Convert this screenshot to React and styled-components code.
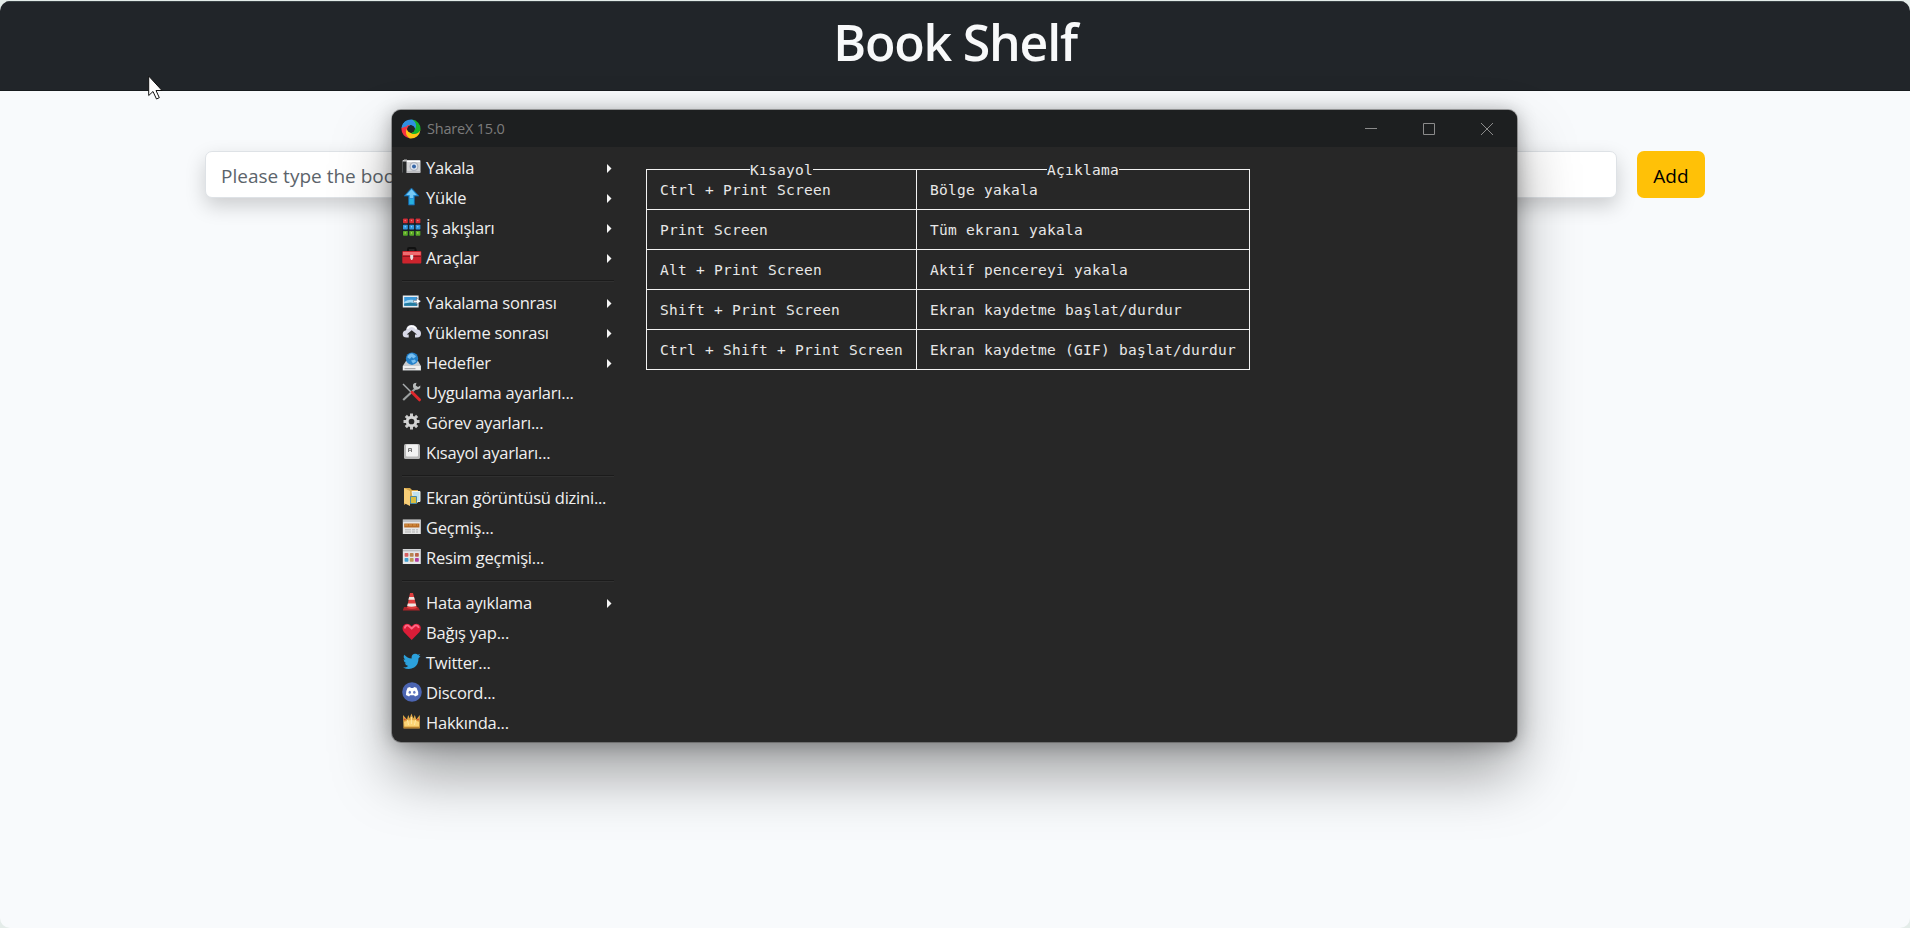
import React from 'react';
import styled, { createGlobalStyle } from 'styled-components';

const Global = createGlobalStyle`
  * { box-sizing: border-box; }
  html, body, #root { height: 100%; }
  body { margin: 0; background: #e4ece9; overflow: hidden; }
`;

const Page = styled.div`
  height: 928px;
  padding-top: 1px;
  font-family: 'Open Sans', 'Noto Sans', sans-serif;
`;

const Browser = styled.div`
  position: relative;
  height: 927px;
  background: #f8fafc;
  border-radius: 10px;
  overflow: hidden;
`;

const Header = styled.header`
  height: 90px;
  background: #212529;
  border-top: 1px solid #3a4346;
  border-bottom: 1px solid #171b1e;
  display: flex;
  justify-content: center;
`;

const Title = styled.h1`
  margin: 0;
  color: #f8f9fa;
  font-size: 50px;
  font-weight: 600;
  line-height: 80px;
  letter-spacing: -1.2px;
`;

const Form = styled.form`
  margin: 60px 205px 0;
  display: flex;
  gap: 20px;
`;

const BookInput = styled.input`
  flex: 1;
  height: 47px;
  padding: 2px 15px 0;
  border: 1px solid #dee2e6;
  border-radius: 7px;
  background: #fff;
  box-shadow: 0 8px 20px rgba(0, 0, 0, 0.18);
  font: 19px 'Open Sans', 'Noto Sans', sans-serif;
  letter-spacing: 0;
  outline: none;
  &::placeholder { color: #5c646b; opacity: 1; }
`;

const AddButton = styled.button`
  width: 68px;
  height: 47px;
  border: 0;
  border-radius: 7px;
  background: #ffc107;
  color: #000;
  font: 19px 'Open Sans', 'Noto Sans', sans-serif;
  padding: 2px 0 0;
`;

const Cursor = styled.svg`
  position: absolute;
  left: 148px;
  top: 74px;
`;

const Window = styled.section`
  position: absolute;
  left: 392px;
  top: 109px;
  width: 1125px;
  height: 632px;
  border-radius: 9px;
  background: #272727;
  box-shadow: 0 0 0 1px rgba(70, 70, 70, 0.45), 0 32px 60px rgba(0, 0, 0, 0.36), 0 2px 20px rgba(0, 0, 0, 0.3);
`;

const TitleBar = styled.div`
  height: 37px;
  padding: 0 24px 0 9px;
  display: flex;
  align-items: center;
  background: #1d1f20;
  border-radius: 9px 9px 0 0;
`;

const WindowTitle = styled.span`
  flex: 1;
  margin-left: 6px;
  color: #7c7c7c;
  font-size: 14.5px;
  letter-spacing: -0.2px;
`;

const WindowControls = styled.div`
  display: flex;
  gap: 46px;
`;

const WindowBody = styled.div`
  display: flex;
`;

const Menu = styled.nav`
  width: 222px;
  padding: 6px 0 0 10px;
`;

const MenuRow = styled.div`
  height: 30px;
  display: flex;
  align-items: center;
  color: #f0f0f0;
`;

const IconSvg = styled.svg`
  flex: none;
  margin-bottom: 2px;
`;

const MenuLabel = styled.span`
  flex: 1;
  margin-left: 4px;
  font-size: 16.5px;
  line-height: 30px;
  letter-spacing: -0.22px;
  white-space: nowrap;
`;

const Separator = styled.div`
  height: 15px;
  display: flex;
  align-items: center;
  &::after {
    content: '';
    flex: 1;
    height: 1px;
    background: #1b1b1b;
    box-shadow: 0 1px #303030;
  }
`;

const ShortcutTable = styled.div`
  margin: 22px 0 0 32px;
  width: 604px;
  height: 201px;
  display: grid;
  grid-template-columns: 270px 333px;
  grid-auto-rows: 40px;
  border: solid #f2f2f2;
  border-width: 1px 0 0 1px;
  font: 14.5px 'DejaVu Sans Mono', monospace;
  letter-spacing: 0.27px;
  color: #e8e8e8;
  position: relative;
`;

const Cell = styled.div`
  padding-left: 13px;
  line-height: 41px;
  border: solid #f2f2f2;
  border-width: 0 1px 1px 0;
  white-space: pre;
`;

const ColumnTitle = styled.span`
  position: absolute;
  top: -10px;
  left: ${(p) => p.$left}px;
  line-height: 20px;
  background: #272727;
`;

const Icon = ({ children }) => (
  <IconSvg width="20" height="20" viewBox="0 0 20 20">{children}</IconSvg>
);

const dots = (colors, size, x0, y0, dx, dy) =>
  colors.flatMap((row, r) => row.map((c, i) => (
    <rect key={`${r}-${i}`} x={x0 + i * dx} y={y0 + r * dy} width={size} height={size} rx=".7" fill={c} />
  )));

const icons = {
  camera: <Icon><rect x=".5" y="3" width="18" height="13" rx="1" fill="#d4d5d7" /><rect x=".5" y="4.5" width="4" height="11.5" fill="#252728" /><path d="M2 2.500h3V4H2z" fill="#bbb" /><path d="M5 4.500h13" stroke="#fff" /><path d="M5 15h13.500" stroke="#a5a6aa" /><circle cx="12" cy="9.5" r="4.5" fill="#aeb3bd" /><circle cx="12" cy="9.5" r="3.2" fill="#e2e7f0" /><circle cx="12" cy="9.5" r="2" fill="#3868a8" /></Icon>,
  upload: <Icon><path d="M9.5 1L17 9h-4.5v9h-6V9H2z" fill="#2795db" stroke="#175f99" strokeWidth=".8" /><path d="M9.5 2.2L14.5 8h-3.3v3H7.8V8H4.3z" fill="#75c8f5" /><rect x="7.5" y="12" width="4" height="5" fill="#27b0de" /></Icon>,
  grid: <Icon><rect x=".5" y="1" width="18" height="18" rx="1" fill="#17212a" />{dots([['#d32f35', '#d32f35', '#d32f35'], ['#3295dc', '#3295dc', '#3295dc'], ['#5aa927', '#5aa927', '#5aa927']], 4.8, 1, 1.5, 6.3, 6.2)}{dots([['#f28484', '#f28484', '#f28484'], ['#93d9ff', '#93d9ff', '#93d9ff'], ['#c0ec72', '#c0ec72', '#c0ec72']], 1.4, 2.5, 2.8, 6.3, 6.2)}</Icon>,
  toolbox: <Icon><path d="M6 5V2.2q0-1.2 1.2-1.2h5q1.3 0 1.3 1.2V5" fill="none" stroke="#111" strokeWidth="2" /><rect x=".3" y="4" width="19" height="12.5" rx="1" fill="#cd242d" /><path d="M1 5h17.7v3H1z" fill="#ee6d70" /><path d="M.3 9.5h19" stroke="#8f1820" /><path d="M8.2 8h3v3l-1 2h-1l-1-2z" fill="#e5e5e5" /></Icon>,
  capture: <Icon><rect x=".8" y="3.5" width="15.8" height="12" fill="#e8edf2" /><rect x="2.2" y="5" width="13" height="8.8" fill="#3d9bdc" /><path d="M2.2 10q5-4 13-1v2H2.2z" fill="#a8daf3" /><path d="M2.2 12q6-3 13 0v1.8H2.2z" fill="#237b9e" /><path d="M11.5 8.400h3V6L19 9.2l-4.500 3.400v-2.300h-3z" fill="#fff" stroke="#334" strokeWidth=".4" /></Icon>,
  cloud: <Icon><path d="M4.5 15.5Q.7 15.5.7 12q0-3 3.3-3.8Q4.7 3 9.7 3q4.6 0 5.8 4.6 3.5.6 3.5 4 0 3.9-4 3.9h-2v-3h2L9.7 8.300 4.700 12.500h2v3z" fill="#d8d9e7" /><path d="M5.5 7Q7 4 10 4.2q3 .1 4.2 3" fill="none" stroke="#fff" strokeWidth="1.4" /></Icon>,
  target: <Icon><path d="M4 9h12l3 5v4.5H.7V14z" fill="#c8cbce" /><path d="M1 14h17.5v4H1z" fill="#eee" /><path d="M2.5 16.7h11" stroke="#959799" /><circle cx="10" cy="6.7" r="6.2" fill="#2581c9" /><path d="M5.2 5.3Q7 1.3 10.3 1.6l3.8 2.6-2.5 2.2-2-1.3-1.8 2zM9 8.5l4-1 1 2-3 2z" fill="#77bff1" /></Icon>,
  tools: <Icon><path d="M1 2l8 8" stroke="#a9adaf" strokeWidth="1.5" /><path d="M1.2 18L14 6" stroke="#9ca0a0" strokeWidth="2.2" /><path d="M12.2 1.2q-2 1.4-.8 4.7 2.4 3 5.4 1.2 2-1.2 1.6-3.6L16 5l-2.3-1.5.8-2.7z" fill="#b8bbbb" /><path d="M10 10.3l7.5 7.5" stroke="#df282c" strokeWidth="3" strokeLinecap="round" /></Icon>,
  gear: <Icon>{[0, 45, 90, 135, 180, 225, 270, 315].map((a) => <rect key={a} x="8" y="1.5" width="3" height="4.5" fill="#ccc" transform={`rotate(${a} 9.5 9.5)`} />)}<circle cx="9.5" cy="9.5" r="4.3" fill="none" stroke="#d4d4d4" strokeWidth="2.9" /></Icon>,
  key: <Icon><rect x="2" y="2" width="16" height="15" rx="1.5" fill="#b8b8b8" /><rect x="4" y="2.5" width="12" height="12" rx="1" fill="#f2f2f2" /><path d="M6.5 10V6.5h3V10M6.5 8.3h3" fill="none" stroke="#777" /></Icon>,
  folder: <Icon><path d="M2 1h6l2 2h6v13H5l-3 2z" fill="#d7a84b" /><path d="M10 4.500h8v10h-6z" fill="#bfe1ef" stroke="#f1f3e9" /><path d="M8.500 9.500h6v7h-6z" fill="#d9bd3f" stroke="#4b8ba3" /><path d="M2 1l6 3v15l-6-3z" fill="#f7cd77" /></Icon>,
  history: <Icon><rect x=".8" y="2.5" width="18" height="14.5" fill="#e6e6e6" /><path d="M1 4h17" stroke="#b7babe" strokeWidth="1.7" /><rect x="2.2" y="6.5" width="15.2" height="4" fill="#b96c26" /><path d="M3 8h13" stroke="#d99a4a" strokeDasharray="3 1" /><path d="M3 12.8h13M3 15h13" stroke="#b3b3b3" strokeDasharray="6 1 3 1" /></Icon>,
  images: <Icon><rect x=".8" y="2" width="18" height="15" fill="#e4e5e8" /><path d="M1 3.5h17.6" stroke="#b7babe" strokeWidth="1.7" />{dots([['#d75f62', '#b88450', '#ba6347'], ['#3e9fcf', '#bf9853', '#b43da0']], 3.8, 2.6, 6, 5.2, 5)}</Icon>,
  cone: <Icon><path d="M2 15h14l2 3.5H.8z" fill="#ac2429" /><path d="M8 1h3l4 15q-5 2-10 0z" fill="#df3e3e" /><path d="M7.1 5h4.900l.8 2.800H6.400zM5.800 11.500h7.800l.6 2.500q-5 1.500-9 0z" fill="#efe9e4" /></Icon>,
  heart: <Icon><path d="M9.7 18L1.9 10Q-.5 6.8 1.3 3.8q2.2-3.3 6-1.5l2.4 2 2.3-2q4-1.8 6.2 1.5 1.6 3-.7 6.2z" fill="#db1d38" /><path d="M2.8 6.5Q3 3 6.2 3.5l3.5 3 3.3-3q3-.6 3.8 2.5" fill="none" stroke="#ff6885" strokeWidth="1.8" /></Icon>,
  twitter: <Icon><path d="M18.5 4.2l-2 2.1q.1 6.3-4.4 9.3-5.3 3-11.1-.2 3.3.1 5.2-1.5-2.6-.4-3.5-2.7h1.7Q1.6 9.8 1.5 7.2l1.8.5Q.7 5.5 2.3 2.7 5.4 6.3 9.6 6.5 9.1 2.4 12.8 1.7q2-.2 3.1 1l2.3-.8-1.5 2.1z" fill="#2ca1dc" /></Icon>,
  discord: <Icon><circle cx="10" cy="10" r="9.800" fill="#4c65b2" /><path d="M5.6 5.700l2.5-.7.7 1h2.5l.7-1 2.5.7q2.2 4 1.7 7.3l-3.2 1.5-.9-1.2H8l-.9 1.2-3.2-1.5q-.2-3.800 1.700-7.300z" fill="#fff" /><ellipse cx="7.8" cy="10.200" rx="1.2" ry="1.5" fill="#657ac2" /><ellipse cx="12.3" cy="10.200" rx="1.2" ry="1.5" fill="#657ac2" /></Icon>,
  crown: <Icon><path d="M1 3l4 4.500L6.200 3l1.500 3.500L9.400 1.500l2 5L12.800 3l1.500 4.500L17.800 3v13.500H1.500z" fill="#e0aa48" /><path d="M2 10q8-4 15 0v4.500H2.500z" fill="#fbd475" /><path d="M2 15.500h15.500" stroke="#b98230" strokeWidth="1.200" /><path d="M5.500 8l1 5M13.500 8l-1 5M9.400 5v7" stroke="#ffe7a3" /><circle cx="2.800" cy="7.500" r="1" fill="#d84c35" /><circle cx="16" cy="7.500" r="1" fill="#d84c35" /></Icon>,
};

const groups = [
  [['camera', 'Yakala', true], ['upload', 'Yükle', true], ['grid', 'İş akışları', true], ['toolbox', 'Araçlar', true]],
  [['capture', 'Yakalama sonrası', true], ['cloud', 'Yükleme sonrası', true], ['target', 'Hedefler', true], ['tools', 'Uygulama ayarları...'], ['gear', 'Görev ayarları...'], ['key', 'Kısayol ayarları...']],
  [['folder', 'Ekran görüntüsü dizini...'], ['history', 'Geçmiş...'], ['images', 'Resim geçmişi...']],
  [['cone', 'Hata ayıklama', true], ['heart', 'Bağış yap...'], ['twitter', 'Twitter...'], ['discord', 'Discord...'], ['crown', 'Hakkında...']],
];

const shortcuts = [
  ['Ctrl + Print Screen', 'Bölge yakala'],
  ['Print Screen', 'Tüm ekranı yakala'],
  ['Alt + Print Screen', 'Aktif pencereyi yakala'],
  ['Shift + Print Screen', 'Ekran kaydetme başlat/durdur'],
  ['Ctrl + Shift + Print Screen', 'Ekran kaydetme (GIF) başlat/durdur'],
];

const swirl = [
  ['#f53340', 270], ['#ffc414', 180], ['#16b229', 90], ['#2f8fe0', 0],
];

const Logo = () => (
  <svg width="20" height="20" viewBox="0 0 20 20">
    <circle cx="10" cy="10" r="6.500" fill="none" stroke="#2f8fe0" strokeWidth="5" />
    {swirl.map(([color, angle]) => (
      <path
        key={angle}
        d="M.6 9A9.500 9.500 0 0 1 11 .5Q16.500 3.500 14.500 10 12 5.500 8.500 6.200 4 5 .6 9z"
        fill={color}
        transform={`rotate(${angle} 10 10)`}
      />
    ))}
    <path d="M.6 9A9.500 9.500 0 0 1 6 1.400L6.500 7z" fill="#2f8fe0" />
    <circle cx="10" cy="10" r="3.300" fill="#202326" />
  </svg>
);

export default function App() {
  return (
    <Page>
      <Global />
      <Browser>
        <Header><Title>Book Shelf</Title></Header>
        <Form>
          <BookInput placeholder="Please type the book" />
          <AddButton type="button">Add</AddButton>
        </Form>
        <Cursor width="16" height="25" viewBox="0 0 16 25">
          <path d="M.7 1v19.500l4.300-4 3.500 7.500 2.800-1.300L8 15.500h6z" fill="#fff" stroke="#111" />
        </Cursor>
        <Window>
          <TitleBar>
            <Logo />
            <WindowTitle>ShareX 15.0</WindowTitle>
            <WindowControls>
              {['M0 5.500h12', 'M.5.500h11v11H.500z', 'M0 0l12 12M12 0L0 12'].map((d) => (
                <svg key={d} width="12" height="12" viewBox="0 0 12 12"><path d={d} fill="none" stroke="#8b8b8b" /></svg>
              ))}
            </WindowControls>
          </TitleBar>
          <WindowBody>
            <Menu>
              {groups.map((group, g) => (
                <React.Fragment key={g}>
                  {g > 0 && <Separator />}
                  {group.map(([icon, label, sub]) => (
                    <MenuRow key={label}>
                      {icons[icon]}
                      <MenuLabel>{label}</MenuLabel>
                      {sub && <svg width="7" height="9" viewBox="0 0 7 9"><path d="M0 0L4.500 4.500 0 9z" fill="#f5f5f5" /></svg>}
                    </MenuRow>
                  ))}
                </React.Fragment>
              ))}
            </Menu>
            <ShortcutTable>
              <ColumnTitle $left={103}>Kısayol</ColumnTitle>
              <ColumnTitle $left={400}>Açıklama</ColumnTitle>
              {shortcuts.flatMap((row) => row.map((text) => <Cell key={text}>{text}</Cell>))}
            </ShortcutTable>
          </WindowBody>
        </Window>
      </Browser>
    </Page>
  );
}
